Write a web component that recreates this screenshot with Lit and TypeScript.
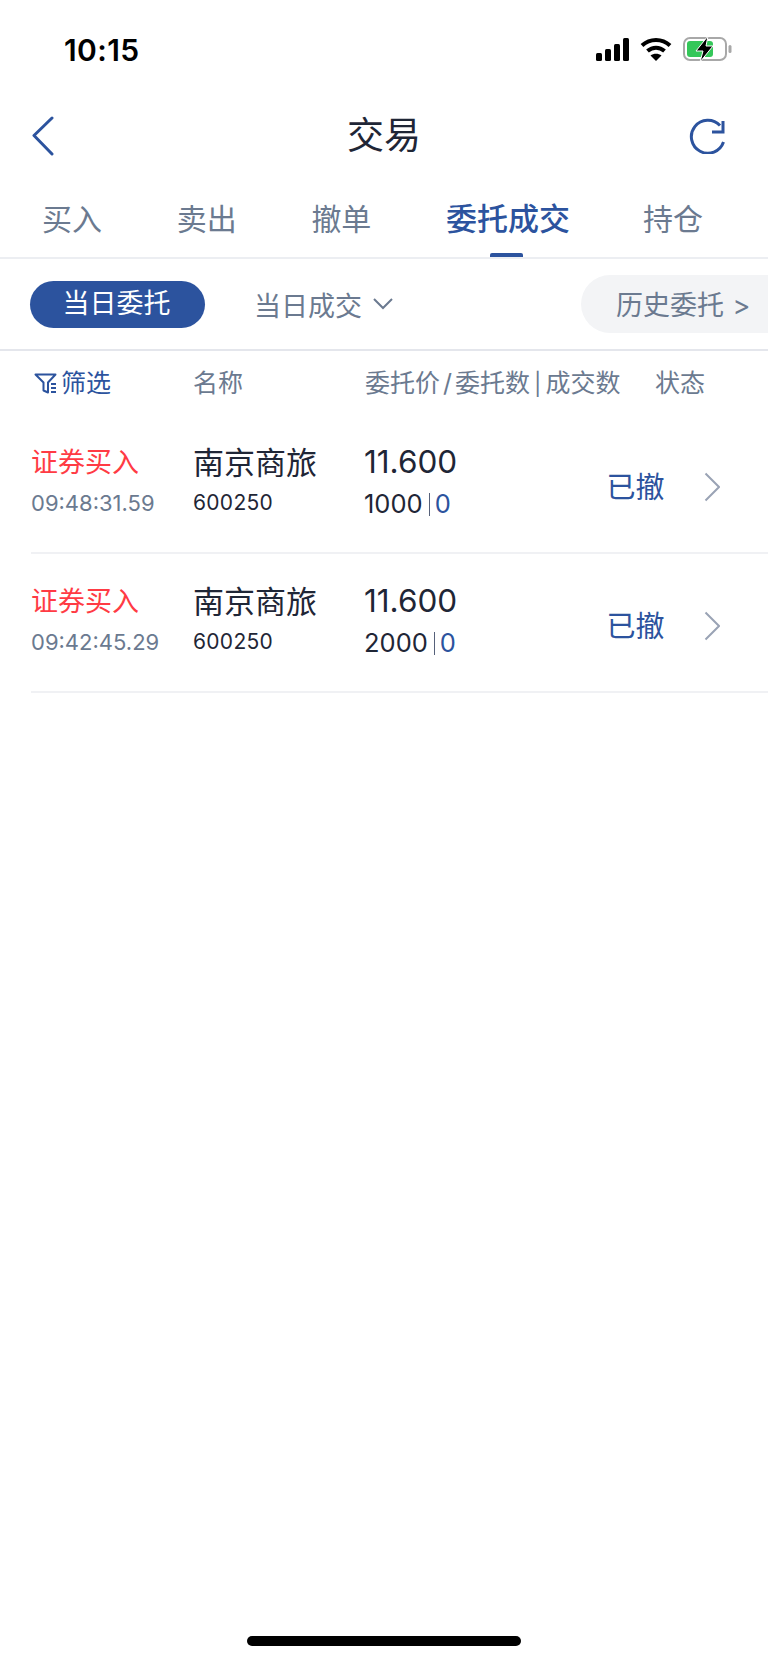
import { LitElement, html, css } from "lit";
import { customElement } from "lit/decorators.js";

const rows = [
  { time: "09:48:31.59", qty: "1000" },
  { time: "09:42:45.29", qty: "2000" },
];

@customElement("app-root")
export class AppRoot extends LitElement {
  static styles = css`
    :host {
      display: block;
      position: relative;
      width: 768px;
      height: 1663px;
      background: #fff;
      overflow: hidden;
      font-family: Inter, "Noto Sans CJK SC", sans-serif;
      color: #1f2636;
    }
    .status { height: 91px; box-sizing: border-box; padding: 10px 36px 0 64px; display: flex; justify-content: space-between; align-items: flex-start; }
    .time { font-size: 30px; font-weight: 600; color: #000; letter-spacing: 0.4px; line-height: 80px; }
    .status-icons { display: flex; align-items: center; gap: 11px; margin-top: 26px; }
    .status-icons svg { display: block; }
    .nav { height: 90px; display: grid; grid-template-columns: 1fr auto 1fr; align-items: center; padding: 0 43px; box-sizing: border-box; }
    .nav svg { display: block; }
    .nav svg.back { margin-left: -11px; }
    .nav svg.refresh { justify-self: end; }
    .title { font-size: 37px; line-height: 44px; color: #1f2636; }
    .tabs { height: 76px; display: flex; border-bottom: 2px solid #eceef2; padding-left: 42px; }
    .tab { font-size: 30px; line-height: 40px; padding-top: 18px; box-sizing: border-box; color: #6b7a90; position: relative; white-space: nowrap; width: 134.7px; }
    .tab.on { color: #2c539e; font-weight: 500; font-size: 31px; width: 197px; }
    .tab.on::after { content: ""; position: absolute; left: 44px; bottom: 0; width: 33px; height: 4px; background: #2c539e; border-radius: 2px 2px 0 0; }
    .tab.last { width: auto; }
    .filters { height: 90px; display: flex; align-items: center; border-bottom: 2px solid #e4e6ec; padding-left: 30px; position: relative; }
    .pill { width: 175px; height: 47px; box-sizing: border-box; padding-right: 2px; border-radius: 24px; background: #2c539e; color: #fff; font-size: 27px; line-height: 46px; text-align: center; }
    .drop { margin-left: 49px; display: flex; align-items: center; gap: 11px; font-size: 27px; color: #6b7a90; }
    .history { position: absolute; right: 0; top: 16px; width: 187px; height: 58px; box-sizing: border-box; padding-left: 35px; background: #f3f4f6; border-radius: 29px 0 0 29px; color: #6b7a90; font-size: 27px; line-height: 61px; white-space: nowrap; word-spacing: 1px; }
    .cols { display: grid; grid-template-columns: 162px 172px 290px 1fr; padding: 14px 0 0 31px; height: 50px; font-size: 25px; line-height: 36px; color: #6b7a90; }
    .filter { display: flex; align-items: center; gap: 3px; color: #2c539e; padding-left: 3px; height: 36px; }
    .sep { margin: 0 3px; }
    .pipe { font-size: 22px; margin: 0 4px; }
    .row { display: grid; grid-template-columns: 162px 171px 242.5px 97.5px 16px; margin-left: 31px; height: 137px; border-bottom: 2px solid #f0f1f4; align-items: center; }
    .a { display: flex; flex-direction: column; gap: 8px; margin-top: -4px; }
    .c { gap: 10px; margin-top: -3px; }
    .big { font-size: 27px; line-height: 34px; color: #ff3b44; }
    .sub { font-size: 22px; line-height: 30px; color: #6b7a90; }
    .name { font-size: 31px; line-height: 34px; }
    .code { font-size: 21px; line-height: 30px; color: #1f2636; letter-spacing: 0.3px; }
    .price { font-size: 31.5px; line-height: 34px; }
    .qty { font-size: 25.5px; line-height: 30px; display: flex; align-items: center; }
    .bar { width: 1px; height: 23px; background: #56617a; margin: 0 5px 0 6px; }
    .zero { color: #2c539e; }
    .state { font-size: 29px; color: #2c539e; margin-top: 2px; }
    .row svg { display: block; margin-top: 6px; }
    .home { position: absolute; left: 247px; top: 1636px; width: 274px; height: 10px; border-radius: 5px; background: #000; }
  `;

  private renderRow(r: { time: string; qty: string }) {
    return html`<div class="row">
      <div class="a"><div class="big">证券买入</div><div class="sub">${r.time}</div></div>
      <div class="a"><div class="name">南京商旅</div><div class="code">600250</div></div>
      <div class="a c"><div class="price">11.600</div><div class="qty">${r.qty}<span class="bar"></span><span class="zero">0</span></div></div>
      <div class="state">已撤</div>
      <svg width="16" height="30" viewBox="0 0 16 30" fill="none" stroke="#9aa3b5" stroke-width="2"><path d="M1.500 1.500L15 15 1.500 28.500"/></svg>
    </div>`;
  }

  render() {
    return html`
      <div class="status">
        <div class="time">10:15</div>
        <div class="status-icons">
          <svg width="33" height="23" viewBox="0 0 33 23" fill="#000">
            <rect x="0" y="15" width="6" height="8" rx="1.5"/><rect x="9" y="11" width="6" height="12" rx="1.5"/><rect x="18" y="6" width="6" height="17" rx="1.5"/><rect x="27" y="0" width="6" height="23" rx="1.5"/>
          </svg>
          <svg width="32" height="24" viewBox="0 0 32 24" fill="none" stroke="#000" stroke-width="4">
            <path d="M2 8.500C10 1 22 1 30 8.500"/><path d="M7.500 14c5-4.500 12-4.500 17 0"/><path d="M16 24l-5.500-5.500c3-2.400 8-2.400 11 0z" fill="#000" stroke="none"/>
          </svg>
          <svg width="49" height="26" viewBox="0 0 49 26">
            <rect x="1" y="2" width="42" height="22" rx="6" fill="none" stroke="#a8a8a8" stroke-width="2"/>
            <rect x="45.500" y="9" width="3" height="8" rx="1.500" fill="#a8a8a8"/>
            <rect x="4" y="5" width="26" height="16" rx="3" fill="#34c759"/>
            <path d="M25 0L13 15h7l-3 11L30 10h-7z" fill="#000" stroke="#fff" stroke-width="1"/>
          </svg>
        </div>
      </div>
      <div class="nav">
        <svg class="back" width="22" height="40" viewBox="0 0 22 40" fill="none" stroke="#2c539e" stroke-width="3" stroke-linecap="round" stroke-linejoin="round"><path d="M20 2L2 19.500 20 38"/></svg>
        <div class="title">交易</div>
        <svg class="refresh" width="36" height="36" viewBox="0 0 36 36" fill="none" stroke="#2c539e" stroke-width="3"><path d="M34.500 24A16.500 16.500 0 1 1 31 7.500"/><path d="M34 3v11H23"/></svg>
      </div>
      <div class="tabs">
        <div class="tab">买入</div>
        <div class="tab">卖出</div>
        <div class="tab">撤单</div>
        <div class="tab on">委托成交</div>
        <div class="tab last">持仓</div>
      </div>
      <div class="filters">
        <div class="pill">当日委托</div>
        <div class="drop">当日成交
          <svg width="20" height="12" viewBox="0 0 20 12" fill="none" stroke="#6b7a90" stroke-width="2"><path d="M1 1l9 9 9-9"/></svg>
        </div>
        <div class="history">历史委托 &gt;</div>
      </div>
      <div class="cols">
        <div class="filter">
          <svg width="24" height="21" viewBox="0 0 24 21" fill="none" stroke="#2c539e" stroke-width="2" stroke-linejoin="round"><path d="M1.500 1.500h20l-7.500 8v10l-4.500-2v-8z"/><path d="M17 11h5M17 15h5M17 19h5"/></svg>
          <span>筛选</span>
        </div>
        <div>名称</div>
        <div>委托价<span class="sep">/</span>委托数<span class="pipe">|</span>成交数</div>
        <div>状态</div>
      </div>
      ${rows.map((r) => this.renderRow(r))}
      <div class="home"></div>
    `;
  }
}
